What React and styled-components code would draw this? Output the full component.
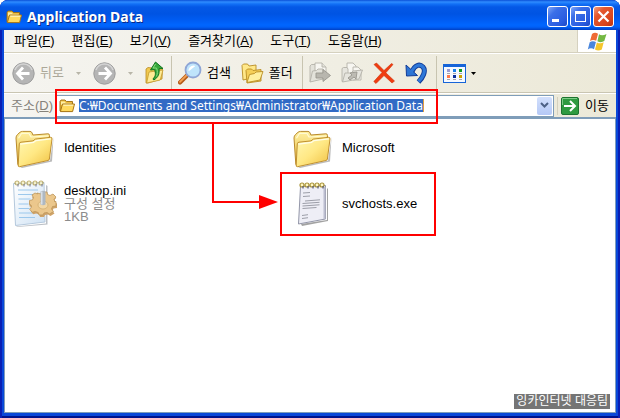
import styled, { createGlobalStyle, css } from 'styled-components'

const GlobalStyle = createGlobalStyle`
  * {
    box-sizing: border-box;
  }

  body {
    margin: 0;
    background: #ffffff;
  }

  body, button, input {
    font-family: 'Liberation Sans', 'Noto Sans CJK KR', sans-serif;
    font-size: 13px;
    line-height: 16px;
    color: #000000;
  }

  button {
    margin: 0;
    padding: 0;
    border: 0;
    background: none;
  }

  svg {
    display: block;
    flex: none;
  }
`

const Window = styled.div`
  position: relative;
  display: flex;
  flex-direction: column;
  min-height: 100vh;
  padding: 0 4px 5px;
  border-radius: 8px 8px 0 0;
  overflow: hidden;
  background: #0a48d8;
  box-shadow: inset 2px 0 #0a1fb4, inset -2px 0 #0a1fb4, inset 0 -2px #00138c;
`

const TitleBar = styled.header`
  display: flex;
  align-items: center;
  gap: 5px;
  height: 30px;
  margin: 0 -4px;
  padding: 3px 6px 0;
  background: linear-gradient(
    #0a50d8 0,
    #2f8cff 2px,
    #1270f6 4px,
    #0458e6 7px,
    #0054e3 14px,
    #005cf2 20px,
    #0066ff 25px,
    #0060f8 27px,
    #0040c4 30px
  );
`

const Title = styled.h1`
  flex: 1;
  margin: 0;
  font-family: 'Noto Sans', sans-serif;
  font-size: 14px;
  font-weight: 700;
  line-height: 20px;
  color: #ffffff;
  text-shadow: 1px 1px #0a2a88;
`

const Controls = styled.div`
  display: flex;
  gap: 2px;
`

const ControlButton = styled.button`
  display: flex;
  align-items: center;
  justify-content: center;
  width: 21px;
  height: 21px;
  border: 1px solid #ffffff;
  border-radius: 3px;
  background: ${({ $close }) =>
    $close
      ? 'linear-gradient(135deg, #f0a080 0, #e4582f 30%, #d8441c 75%, #b83410)'
      : 'linear-gradient(135deg, #7fa6f8 0, #3b6fe8 30%, #2a5ce0 75%, #1c48c4)'};
`

const MenuBar = styled.nav`
  display: flex;
  align-items: stretch;
  height: 23px;
  background: linear-gradient(90deg, #f5f4f0, #ece9d8);
  border-bottom: 1px solid #d5d1bf;
`

const MenuList = styled.div`
  display: flex;
  flex: 1;
  align-items: center;
  gap: 17px;
  padding-left: 10px;
`

const MenuButton = styled.button`
  white-space: nowrap;
`

const FlagBox = styled.div`
  display: flex;
  align-items: center;
  justify-content: center;
  width: 39px;
  border-left: 1px solid #d5d1bf;
  background: #ffffff;
`

const ToolBar = styled.div`
  display: flex;
  align-items: center;
  height: 40px;
  padding-left: 8px;
  background: linear-gradient(90deg, #f5f4f0, #ece9d8);
  border-top: 1px solid #ffffff;
  border-bottom: 1px solid #c9c5b2;
`

const ToolGroup = styled.div`
  display: flex;
  align-items: center;
  height: 34px;
  gap: ${({ $gap }) => $gap}px;
  padding: 0 ${({ $end }) => $end}px 0 6px;
  ${({ $first }) =>
    $first &&
    css`
      padding-left: 0;
    `}

  & + & {
    border-left: 1px solid #c8c4b0;
  }
`

const ToolButton = styled.button`
  display: flex;
  align-items: center;
  gap: 5px;
  white-space: nowrap;

  &:disabled {
    color: #aca899;
  }
`

const AddressBar = styled.div`
  display: flex;
  align-items: center;
  height: 24px;
  padding-left: 7px;
  background: linear-gradient(90deg, #f5f4f0, #ece9d8);
  border-top: 1px solid #ffffff;
`

const AddressLabel = styled.label`
  width: 45px;
  color: #85827a;
  white-space: nowrap;
`

const AddressBox = styled.div`
  display: flex;
  flex: 1;
  align-items: center;
  min-width: 0;
  height: 22px;
  padding: 1px 1px 1px 2px;
  border: 1px solid #7f9db9;
  background: #ffffff;
`

const AddressField = styled.div`
  display: flex;
  flex: 1;
  min-width: 0;
  padding-left: 4px;
`

const AddressInput = styled.input`
  field-sizing: content;
  max-width: 100%;
  height: 13px;
  padding: 0;
  border: 0;
  border-right: 1px solid #e0a040;
  outline: 0;
  font-family: 'Noto Sans', 'Noto Sans CJK KR', sans-serif;
  font-size: 12px;
  line-height: 13px;
  background: #316ac5;
  color: #ffffff;
`

const DropButton = styled.button`
  display: flex;
  align-items: center;
  justify-content: center;
  width: 15px;
  height: 18px;
  border-radius: 2px;
  background: linear-gradient(#d3e0fc, #b4c8f6);
`

const GoButton = styled.button`
  display: flex;
  align-items: center;
  gap: 6px;
  margin-left: 3px;
  padding: 0 7px 0 3px;
  border-left: 1px solid #d5d1bf;
  white-space: nowrap;
`

const Content = styled.main`
  flex: 1;
  padding: 4px 5px;
  border: 1px solid #7f9db9;
  border-top-width: 2px;
  background: #ffffff;
`

const FileGrid = styled.ul`
  display: grid;
  grid-template-columns: repeat(auto-fill, 278px);
  row-gap: 8px;
  margin: 0;
  padding: 0;
  list-style: none;
`

const FileItem = styled.li`
  display: flex;
  align-items: center;
  gap: 6px;
  height: 48px;
`

const FileText = styled.div`
  display: flex;
  flex-direction: column;
  line-height: 13px;
`

const FileDetail = styled.span`
  color: #8c8c8c;
`

const Callout = styled.div`
  position: absolute;
  border: 2px solid #ff0000;
  pointer-events: none;
`

const AddressCallout = styled(Callout)`
  top: 89px;
  left: 55px;
  width: 383px;
  height: 35px;
`

const FileCallout = styled(Callout)`
  top: 172px;
  left: 280px;
  width: 156px;
  height: 64px;
`

const CalloutArrow = styled.svg`
  position: absolute;
  top: 123px;
  left: 212px;
  pointer-events: none;
`

const Watermark = styled.div`
  position: absolute;
  right: 10px;
  bottom: 9px;
  padding: 0 2px;
  background: #757575;
  color: #ffffff;
  font-size: 12px;
  line-height: 15px;
`

const SmallFolder = () => (
  <svg width="16" height="16" viewBox="0 0 16 16">
    <path d="M1 3.5 2 2h4l1.5 1.5h6v9.500H1z" fill="#efbe3e" stroke="#9a6c12" strokeWidth=".9" />
    <path d="M2 3.500h3.500L7 5h5.500v2H2z" fill="#fff0a4" />
    <path d="M3.500 6h12L13.600 13.600H1.400z" fill="#ffd95e" stroke="#a87616" />
    <path d="M4.300 7.200h10" stroke="#fff8cc" />
  </svg>
)

const BigFolder = () => (
  <svg width="48" height="48" viewBox="0 0 48 48">
    <defs>
      <linearGradient id="folderFront" x1="0" y1="0" x2="1" y2="1">
        <stop offset="0" stopColor="#fff8b4" />
        <stop offset=".5" stopColor="#ffe884" />
        <stop offset="1" stopColor="#f0c040" />
      </linearGradient>
      <linearGradient id="folderBack" x1="0" y1="0" x2="0" y2="1">
        <stop offset="0" stopColor="#fff0a0" />
        <stop offset="1" stopColor="#e6b83c" />
      </linearGradient>
    </defs>
    <path d="M10 44 40 37.5 43.5 14 42 38.5 12 45z" fill="#777" opacity=".5" />
    <path d="M6 15Q6 13 7.500 11.500L10 9.300Q11 8.400 12.500 8.400h7.500Q21.500 8.400 22.100 10l.8 2 15-1.200Q39.500 10.700 39.500 12.500L39 32 10 43Q8 43 7.800 41z" fill="url(#folderBack)" stroke="#b98a2c" />
    <path d="M8.500 15.200 11.500 10.500h7.500l2 3.500 17-1" fill="none" stroke="#fffad4" strokeWidth="1.2" />
    <path d="M9.300 20.800Q9.400 19.400 11 19.200l12-1.300 2.300-1.800 15.300-1.800Q42.200 14.200 42 16l-2.600 20Q39.200 37.200 38 37.500L9.500 43.700Q8 43.900 8.200 42z" fill="url(#folderFront)" stroke="#c09030" />
    <path d="m10.300 21.200 13.200-1.800 2.500-1.800 14.800-1.800" fill="none" stroke="#fffde8" strokeWidth="1.2" />
  </svg>
)

const Rings = ({ xs, y }) => xs.map((x) => (
  <g key={x}>
    <circle cx={x} cy={y} r="2" fill="#fff6c0" stroke="#a89238" strokeWidth="1.2" />
    <path d={`M${x + 1} ${y + 1}v2.500`} stroke="#55597a" strokeWidth="1.2" />
  </g>
))

const IniIcon = () => (
  <svg width="48" height="48" viewBox="0 0 48 48">
    <defs>
      <linearGradient id="iniPage" x1="0" y1="0" x2="1" y2="1">
        <stop offset="0" stopColor="#ffffff" />
        <stop offset="1" stopColor="#cfe2f4" />
      </linearGradient>
    </defs>
    <path d="M6 47.500 36 44.500V6l1.500 1v38.500L7 48z" fill="#aab0b8" opacity=".8" />
    <path d="M3.500 4.500 34 3.500 35 43 5.500 46.500z" fill="url(#iniPage)" stroke="#b4c8dc" />
    <path d="M8 11h20M8 15.500h18M8.500 20h12M8.500 25h10M8.500 29.500h11M9 34h14M9 38.500h16" stroke="#9cc8ec" />
    <g opacity=".7"><Rings xs={[7, 13, 19, 25, 31]} y={4} /></g>
    <g transform="translate(33 25)">
      <path d="m-6-11 4 1 1-2h5l.5 2.500 2.500 1 3-1.500 3 3-2 2.500 1 2h-.5L14-1.500V3l-3.500.5L9.500 6l2 2.500-4 2.500-2.500-1.500-3 .5-1 2h-4l-.8-2.500-3-1-3 .8-2.500-3 1.800-2.300L-11 2l-2.500-.5v-4l3-.7 1-2.300-1.500-2.500 3-2 2.500 1z" fill="#cfa368" transform="translate(0 1)" />
      <path d="m-6-11 4 1 1-2h5l.5 2.500 2.500 1 3-1.500 3 3-2 2.500 1 2h-.5L13-2.500V2l-3.500.5L8.500 5l2 2.500-4 2.500L4 8.500l-3 .5-1 2h-4l-.8-2.500-3-1-3 .8-2.500-3 1.800-2.300L-12 1l-1.500-.500v-4l3-.7 1-2.300-1.500-2.500 3-2 2.500 1z" fill="#ebc78c" stroke="#bd955a" strokeWidth=".8" />
      <ellipse cx="0" cy="1" rx="5" ry="4" fill="#f3d8a6" stroke="#c8a264" strokeWidth=".6" />
      <path d="M-2.500-12.500q2.500-1.500 5 0v13q-2.500 1.500-5 0z" fill="#aeb8c2" />
      <path d="M-1.200-12.500v13" stroke="#e4e9ef" strokeWidth="1.2" />
    </g>
  </svg>
)

const NotepadIcon = () => (
  <svg width="48" height="48" viewBox="0 0 48 48">
    <path d="m13 45 26-4V9l1 1v32L14 47z" fill="#555" opacity=".55" />
    <path d="M12.500 7.500 37.500 6.500v33.500L10.500 45z" fill="#eeeef6" stroke="#9396a8" />
    <path d="M36.500 8v32" stroke="#bcbed0" strokeWidth="2" />
    <path d="m15 14 7-.5M15 17.500l7-.5M14.500 24.500l17-1.200M14.500 27l17-1.200M14.500 29.500l14-1M17 22l15-1.200M14 36.500l6-.8M14 39.500l6-.8" stroke="#9c9ea8" />
    <Rings xs={[14, 19, 24, 29, 34]} y={6} />
  </svg>
)

const NavCircle = ({ flip }) => (
  <svg width="23" height="23" viewBox="0 0 23 23">
    <circle cx="11.5" cy="11.5" r="10.7" fill="#b5b5b5" stroke="#9c9c9c" />
    <path d="M3 8a9 9 0 0 1 17 0" fill="none" stroke="#d4d4d4" strokeWidth="1.5" />
    <path d="M11 5.5 5.500 11.500 11 17.500M6 11.500h11.500" transform={flip ? 'rotate(180 11.5 11.5)' : undefined} fill="none" stroke="#fff" strokeWidth="2.8" />
  </svg>
)

const Caret = ({ color = '#000' }) => (
  <svg width="5" height="3" viewBox="0 0 5 3">
    <path d="M0 0h5L2.500 3z" fill={color} />
  </svg>
)

const UpIcon = () => (
  <svg width="20" height="24" viewBox="0 0 20 24">
    <path d="M1 8 3 6.500l4 .5 1.500 2 9-2-.5 11L3 22H1z" fill="#f1c94f" stroke="#b98b22" strokeWidth=".8" />
    <path d="m4 11 14-2-2.800 10L1.600 22z" fill="#ffeb96" stroke="#c49a30" strokeWidth=".8" />
    <path d="M10.500 1 18 7.500l-4 .3c.6 5-.6 8.500-5.200 11.200l-.9-1C11 15 10.800 12 9.500 8.500L5.500 9z" fill="#36a83c" stroke="#117420" />
    <path d="M10.500 3 8 7h3.500c1.200 3 1.200 6-.2 8.500" fill="none" stroke="#86dc7c" />
  </svg>
)

const SearchIcon = () => (
  <svg width="24" height="24" viewBox="0 0 24 24">
    <path d="m2 21.500 7.500-7.500" stroke="#b55c1a" strokeWidth="4.200" strokeLinecap="round" />
    <path d="m2 20.800 7-7" stroke="#f3a254" strokeWidth="1.800" strokeLinecap="round" />
    <circle cx="15" cy="9" r="7.500" fill="#bfe4fb" stroke="#8fa6d6" strokeWidth="1.800" />
    <path d="M10.500 10a5 5 0 0 1 5-5.500c2 0 2 1 0 2s-3 3-5 3.500z" fill="#fff" />
  </svg>
)

const FoldersIcon = () => (
  <svg width="23" height="22" viewBox="0 0 23 22">
    <g stroke="#b98d25" strokeWidth=".9">
      <path d="M1 3.500 2.500 2h4L8 4l7-1v12L2 18z" fill="#ffe88a" />
      <path d="M5 8.500 6.500 7h4L12 8.500l8-1V19l-14 2z" fill="#f5cf58" />
      <path d="m8.500 12.500 5-1 1.500-1.500 7-.5-3 8.500L6 20.500z" fill="#fff0a0" />
    </g>
  </svg>
)

const MoveIcon = () => (
  <svg width="22" height="22" viewBox="0 0 22 22">
    <g stroke="#b4b2a9" strokeWidth=".9" fill="#e3e2da">
      <path d="M1 4 2.500 2.500H6L7 4v14l-6 1.500z" />
      <path d="M6 1h7l4 4v10H6z" fill="#f7f6f1" />
      <path d="M13 1v4h4" />
      <path d="m3.500 9 4-.5L9 7h5v10L1 20z" />
      <path d="M7 11h7V7.500l7.500 6-7.500 6V16H7z" fill="#b8b6ae" stroke="#98968e" />
    </g>
  </svg>
)

const CopyIcon = () => (
  <svg width="22" height="22" viewBox="0 0 22 22">
    <g stroke="#b4b2a9" strokeWidth=".9" fill="#e6e5de">
      <path d="M6 1h6l3 3v10H6z" fill="#f7f6f1" />
      <path d="M12 5h5l3 3v10h-8z" fill="#f7f6f1" />
      <path d="M1 6.500 2.500 5.500H6L7 7v11l-6 1.500z" />
      <path d="M4 11h6l2-2 9.500-1-3.500 9L1.500 20z" />
      <path d="m7 16 4-3-2-2 7-1-1 7-2-2-4 3z" fill="#bdbbb3" stroke="#98968e" />
    </g>
  </svg>
)

const DeleteIcon = () => (
  <svg width="22" height="22" viewBox="0 0 22 22">
    <path d="M1 2.500 3.500 1 11 8.500 18.500 1.500l1.500 1L12.800 10.800l8.700 8.200-2.500 2-8-7.500L3 21.500.800 19.500l8.200-9z" fill="#f03c10" stroke="#cc3008" strokeWidth=".6" />
  </svg>
)

const UndoIcon = () => (
  <svg width="23" height="22" viewBox="0 0 23 22">
    <path d="M7 9.500C10 3 14.500 1.500 18 5c3.500 4-.5 11-4.500 15" fill="none" stroke="#123c98" strokeWidth="5" />
    <path d="M1 3 1.500 14l11-.5z" fill="#2c74d4" stroke="#123c98" />
    <path d="M6 10.500C10 3 14.500 1.500 18 5c3.500 4-.5 11-4.500 14.500" fill="none" stroke="#2f78d8" strokeWidth="3.200" />
  </svg>
)

const ViewsIcon = () => (
  <svg width="23" height="19" viewBox="0 0 23 19" shapeRendering="crispEdges">
    <path d="M0 0h23v19H0z" fill="#1664d8" />
    <path d="M1 3h21v15H1z" fill="#f5f9ff" />
    <path d="M4 5h3v3H4z" fill="#9c9cd0" />
    <path d="M10 5h3v3h-3z" fill="#1a80e8" />
    <path d="M16 5h3v3h-3z" fill="#129a22" />
    <path d="M4 11h3v3H4z" fill="#ff7a4a" />
    <path d="M10 11h3v3h-3z" fill="#0a2f9c" />
    <path d="M16 11h3v3h-3z" fill="#d0a000" />
    <path d="M4 9h3v1H4zM10 9h3v1h-3zM16 9h3v1h-3zM4 15h3v1H4zM10 15h3v1h-3zM16 15h3v1h-3z" fill="#a4a4a8" />
  </svg>
)

const FlagIcon = () => (
  <svg width="21" height="19" viewBox="0 0 21 19">
    <path d="M5 2c2-1.700 4-1.500 6-.3L9.200 8.800C7 7.600 5 7.700 3 9z" fill="#ef6a35" />
    <path d="M12 2.300c2 1.200 4.500 1.200 7.500-.4l-2.200 7.200c-2.300 1.400-4.700 1.300-6.900.1z" fill="#74b843" />
    <path d="M2.700 10.200c2-1.400 4.200-1.300 6.200-.1L7 17.200c-2-1.200-4.200-1.200-6.200.2z" fill="#4a86dc" />
    <path d="M9.900 10.400c2.200 1.200 4.400 1.300 6.800-.1l-1.900 7.100c-2.300 1.500-4.600 1.400-6.800.2z" fill="#f5c62c" />
  </svg>
)

const GoIcon = () => (
  <svg width="18" height="18" viewBox="0 0 18 18">
    <rect x=".5" y=".5" width="17" height="17" rx="1.500" fill="#2f9a40" stroke="#1d7430" />
    <path d="M1.500 8V1.500H16" fill="none" stroke="#7fcc88" />
    <path d="M3 9h11M9 4l5 5-5 5" fill="none" stroke="#fff" strokeWidth="2" />
  </svg>
)

const menus = [
  { name: '파일', accel: 'F' },
  { name: '편집', accel: 'E' },
  { name: '보기', accel: 'V' },
  { name: '즐겨찾기', accel: 'A' },
  { name: '도구', accel: 'T' },
  { name: '도움말', accel: 'H' },
]

const files = [
  { name: 'Identities', icon: BigFolder },
  { name: 'Microsoft', icon: BigFolder },
  { name: 'desktop.ini', icon: IniIcon, details: ['구성 설정', '1KB'] },
  { name: 'svchosts.exe', icon: NotepadIcon },
]

const App = () => (
  <>
    <GlobalStyle />
    <Window>
      <TitleBar>
        <SmallFolder />
        <Title>Application Data</Title>
        <Controls>
          <ControlButton aria-label="최소화">
            <svg width="15" height="15" viewBox="0 0 15 15"><path d="M2 10h7v3H2z" fill="#fff" /></svg>
          </ControlButton>
          <ControlButton aria-label="최대화">
            <svg width="15" height="15" viewBox="0 0 15 15"><path d="M2 2h11v11H2zM3 5v7h9V5z" fill="#fff" fillRule="evenodd" /></svg>
          </ControlButton>
          <ControlButton $close aria-label="닫기">
            <svg width="15" height="15" viewBox="0 0 15 15"><path d="m2.500 2.500 10 10M12.500 2.500l-10 10" stroke="#fff" strokeWidth="2.200" /></svg>
          </ControlButton>
        </Controls>
      </TitleBar>

      <MenuBar>
        <MenuList>
          {menus.map((menu) => (
            <MenuButton key={menu.accel}>
              {menu.name}(<u>{menu.accel}</u>)
            </MenuButton>
          ))}
        </MenuList>
        <FlagBox>
          <FlagIcon />
        </FlagBox>
      </MenuBar>

      <ToolBar>
        <ToolGroup $first $gap={12} $end={6}>
          <ToolButton disabled><NavCircle />뒤로</ToolButton>
          <ToolButton disabled aria-label="뒤로 목록"><Caret color="#b8b5a8" /></ToolButton>
          <ToolButton disabled aria-label="앞으로"><NavCircle flip /></ToolButton>
          <ToolButton disabled aria-label="앞으로 목록"><Caret color="#b8b5a8" /></ToolButton>
          <ToolButton aria-label="위로"><UpIcon /></ToolButton>
        </ToolGroup>
        <ToolGroup $gap={10} $end={9}>
          <ToolButton><SearchIcon />검색</ToolButton>
          <ToolButton><FoldersIcon />폴더</ToolButton>
        </ToolGroup>
        <ToolGroup $gap={10} $end={8}>
          <ToolButton disabled aria-label="이동 위치"><MoveIcon /></ToolButton>
          <ToolButton disabled aria-label="복사 위치"><CopyIcon /></ToolButton>
          <ToolButton aria-label="삭제"><DeleteIcon /></ToolButton>
          <ToolButton aria-label="실행 취소"><UndoIcon /></ToolButton>
        </ToolGroup>
        <ToolGroup $gap={4} $end={0}>
          <ToolButton aria-label="보기"><ViewsIcon /><Caret /></ToolButton>
        </ToolGroup>
      </ToolBar>

      <AddressBar>
        <AddressLabel htmlFor="address">주소(<u>D</u>)</AddressLabel>
        <AddressBox>
          <SmallFolder />
          <AddressField>
            <AddressInput
              id="address"
              type="text"
              spellCheck={false}
              defaultValue="C:₩Documents and Settings₩Administrator₩Application Data"
            />
          </AddressField>
          <DropButton aria-label="주소 목록">
            <svg width="9" height="7" viewBox="0 0 9 7"><path d="m1 1 3.500 3.500L8 1" fill="none" stroke="#4d6185" strokeWidth="2" /></svg>
          </DropButton>
        </AddressBox>
        <GoButton><GoIcon />이동</GoButton>
      </AddressBar>

      <Content>
        <FileGrid>
          {files.map(({ name, icon: Icon, details = [] }) => (
            <FileItem key={name}>
              <Icon />
              <FileText>
                <span>{name}</span>
                {details.map((detail) => (
                  <FileDetail key={detail}>{detail}</FileDetail>
                ))}
              </FileText>
            </FileItem>
          ))}
        </FileGrid>
      </Content>

      <AddressCallout />
      <FileCallout />
      <CalloutArrow width="66" height="88" viewBox="0 0 66 88">
        <path d="M1 0v79h48" fill="none" stroke="#ff0000" strokeWidth="2" />
        <path d="m47 72 19 7-19 7z" fill="#ff0000" />
      </CalloutArrow>
      <Watermark>잉카인터넷 대응팀</Watermark>
    </Window>
  </>
)

export default App
